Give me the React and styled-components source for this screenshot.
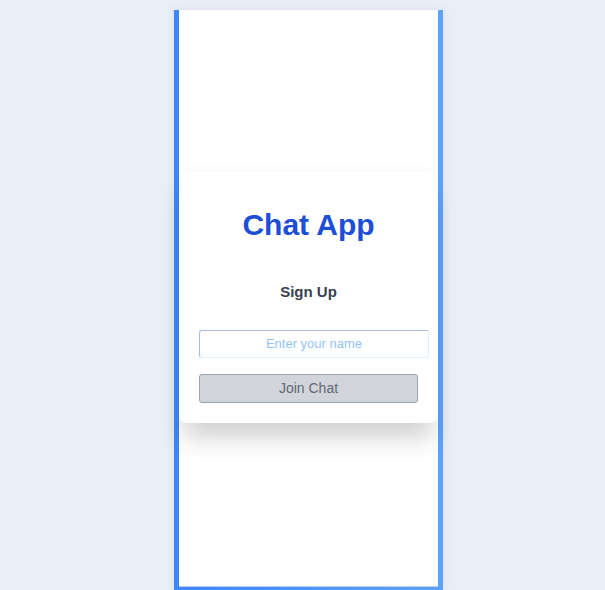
import React, { useState } from "react";
import styled, { createGlobalStyle } from "styled-components";

const GlobalStyle = createGlobalStyle`
  html, body {
    margin: 0;
    padding: 0;
    overflow: hidden;
    background: #eaeef7;
    font-family: "Liberation Sans", Arial, sans-serif;
  }
`;

const Frame = styled.div`
  width: 269px;
  height: 580px;
  margin: 10px 0 0 174px;
  box-sizing: border-box;
  padding: 0 5px 3px 5px;
  background: linear-gradient(to right, #3d86f7, #5ea2fb);
  box-shadow: 0 0 8px rgba(120, 130, 160, 0.15);
  display: flex;
`;

const Screen = styled.div`
  flex: 1;
  background: #fff;
  border-bottom: 1px solid #b7cdf3;
  display: flex;
  flex-direction: column;
  justify-content: center;
  padding-bottom: 2px;
`;

const Card = styled.div`
  background: #fff;
  border-radius: 0 0 8px 8px;
  padding: 32px 20px 20px 20px;
  box-shadow: 0 20px 25px -5px rgba(0, 0, 0, 0.18), 0 -8px 12px -6px rgba(0, 0, 0, 0.03);
  display: flex;
  flex-direction: column;
  align-items: center;
`;

const Title = styled.h1`
  margin: 3px 0 0 0;
  font-size: 30px;
  font-weight: 700;
  color: #1d4ed8;
  line-height: 36px;
`;

const Subtitle = styled.h2`
  margin: 39px 0 0 0;
  font-size: 15px;
  font-weight: 700;
  color: #374151;
  line-height: 20px;
`;

const NameInput = styled.input`
  align-self: stretch;
  margin: 28px -11px 0 0;
  height: 28px;
  box-sizing: border-box;
  border: 1px solid;
  border-color: #a9bcd7 #e3eefc #e3eefc #a9bcd7;
  border-radius: 3px;
  text-align: center;
  font-family: "Liberation Sans", Arial, sans-serif;
  font-size: 13px;
  color: #1f2937;
  outline: none;

  &::placeholder {
    color: #93c5fd;
  }
`;

const JoinButton = styled.button`
  align-self: stretch;
  margin-top: 16px;
  height: 29px;
  box-sizing: border-box;
  background: #d1d5db;
  border: 1px solid #9ca3af;
  border-radius: 3px;
  font-family: "Liberation Sans", Arial, sans-serif;
  font-size: 14px;
  color: #5f6774;
`;

export default function App() {
  const [name, setName] = useState("");

  return (
    <>
      <GlobalStyle />
      <Frame>
        <Screen>
          <Card>
            <Title>Chat App</Title>
            <Subtitle>Sign Up</Subtitle>
            <NameInput
              placeholder="Enter your name"
              value={name}
              onChange={e => setName(e.target.value)}
            />
            <JoinButton disabled={!name}>Join Chat</JoinButton>
          </Card>
        </Screen>
      </Frame>
    </>
  );
}
